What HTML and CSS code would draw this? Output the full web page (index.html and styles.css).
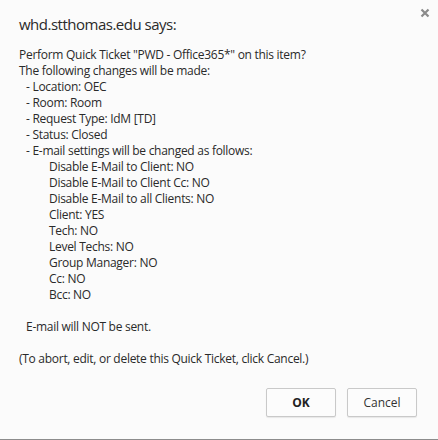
FILE: index.html
```html
<!DOCTYPE html>
<html>
<head>
<meta charset="utf-8">
<link rel="stylesheet" href="styles.css">
</head>
<body>
<div class="dialog">
  <button class="close" aria-label="Close">
    <svg width="10" height="10" viewBox="0 0 10 10"><path d="M1.5 1.5 L8.5 8.5 M8.5 1.5 L1.5 8.5" stroke="#8a8a8a" stroke-width="2.2" fill="none"/></svg>
  </button>
  <div class="title">whd.stthomas.edu says:</div>
  <div class="message">
    <div class="line">Perform Quick Ticket "PWD - Office365*" on this item?</div>
    <div class="line">The following changes will be made:</div>
    <div class="line l1">- Location: OEC</div>
    <div class="line l1">- Room: Room</div>
    <div class="line l1">- Request Type: IdM [TD]</div>
    <div class="line l1">- Status: Closed</div>
    <div class="line l1">- E-mail settings will be changed as follows:</div>
    <div class="line l2">Disable E-Mail to Client: NO</div>
    <div class="line l2">Disable E-Mail to Client Cc: NO</div>
    <div class="line l2">Disable E-Mail to all Clients: NO</div>
    <div class="line l2">Client: YES</div>
    <div class="line l2">Tech: NO</div>
    <div class="line l2">Level Techs: NO</div>
    <div class="line l2">Group Manager: NO</div>
    <div class="line l2">Cc: NO</div>
    <div class="line l2">Bcc: NO</div>
    <div class="line blank"></div>
    <div class="line l1">E-mail will NOT be sent.</div>
    <div class="line blank"></div>
    <div class="line">(To abort, edit, or delete this Quick Ticket, click Cancel.)</div>
  </div>
  <div class="buttons">
    <button class="btn ok">OK</button>
    <button class="btn">Cancel</button>
  </div>
</div>
<div class="pageedge"></div>
</body>
</html>
```
FILE: styles.css
```css
html, body {
  margin: 0;
  padding: 0;
  background: #fbfbfb;
}
body {
  width: 438px;
  height: 440px;
  overflow: hidden;
  font-family: "Open Sans", "Noto Sans", "Liberation Sans", sans-serif;
  color: #2a2a2a;
}
.dialog {
  position: relative;
  height: 439px;
  box-sizing: border-box;
  padding: 13px 21px 0 19px;
  display: flex;
  flex-direction: column;
}
.close {
  position: absolute;
  top: 8px;
  left: 420px;
  width: 10px;
  height: 10px;
  padding: 0;
  border: none;
  background: none;
  display: block;
}
.close svg { display: block; }
.title {
  font-size: 15px;
  line-height: 22px;
  height: 22px;
  letter-spacing: -0.5px;
}
.message {
  margin-top: 12px;
  font-size: 12px;
  line-height: 16px;
  letter-spacing: -0.28px;
}
.line { height: 16px; white-space: nowrap; }
.l1 { padding-left: 7px; }
.l2 { padding-left: 30px; }
.buttons {
  margin-top: 21px;
  display: flex;
  justify-content: flex-end;
  gap: 11px;
}
.btn {
  width: 70px;
  height: 29px;
  box-sizing: border-box;
  border: 1px solid #c9c9c9;
  border-radius: 2px;
  background: #fcfcfc;
  box-shadow: 0 1px 1px rgba(0,0,0,0.08);
  font-family: "Open Sans", "Noto Sans", "Liberation Sans", sans-serif;
  font-size: 12px;
  color: #333;
  padding: 0;
}
.ok { font-weight: bold; color: #222; }
.pageedge {
  height: 1px;
  background: #8c8c8c;
}
```
